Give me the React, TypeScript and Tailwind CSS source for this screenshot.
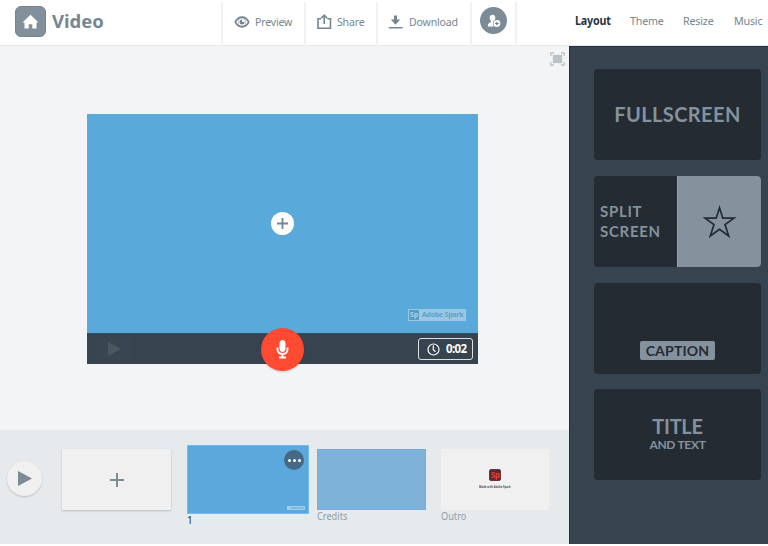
import type { ReactNode } from "react";

const sans = "font-['Noto_Sans','Open_Sans',sans-serif]";
const geo = "font-['Lato',sans-serif]";

function Tool({ width, pad, gap, icon, label, tracking }: { width: string; pad: string; gap: string; icon: ReactNode; label: string; tracking: string }) {
  return (
    <button className={`flex h-[44px] items-center border-l-2 border-[#eff1f2] pb-[5px] ${width} ${pad} ${gap}`}>
      {icon}
      <span className={`origin-left scale-x-[0.92] whitespace-nowrap text-[11.500px] leading-[16px] text-[#758692] ${tracking}`}>{label}</span>
    </button>
  );
}

function Eye() {
  return (
    <svg className="h-[12px] w-[16px] shrink-0" viewBox="0 0 16 12">
      <path d="M.3 6C2 2.300 4.800.3 8 .3s6 2 7.700 5.700C14 9.700 11.200 11.700 8 11.700S2 9.700.3 6Z" fill="#758692" />
      <path d="M2.300 6C3.300 4.300 4 3.400 5 2.900 3.600 4.800 3.600 7.200 5 9.100 4 8.600 3.300 7.700 2.300 6ZM13.700 6C12.700 4.300 12 3.400 11 2.900 12.400 4.800 12.400 7.200 11 9.100 12 8.600 12.700 7.700 13.700 6Z" fill="#fff" />
      <circle cx="8" cy="6" r="3.700" fill="#fff" />
      <circle cx="8" cy="6" r="2.500" fill="#758692" />
      <path d="M8 6V3.800A2.200 2.200 0 0 1 10.200 6Z" fill="#fff" />
    </svg>
  );
}

function ShareIcon() {
  return (
    <svg className="h-[16px] w-[15px] shrink-0" viewBox="0 0 15 16" fill="none" stroke="#758692" strokeWidth="1.600">
      <path d="M4 4.700H1V14.200H13.500V4.700H10.500M7.250 10V1.500M4.300 4.200 7.250 1.200 10.200 4.200" />
    </svg>
  );
}

function DownloadIcon() {
  return (
    <svg className="h-[14px] w-[15px] shrink-0" viewBox="0 0 15 14" fill="#758692">
      <path d="M6 .5H9V4.500H12.200L7.500 9.800 2.800 4.500H6ZM.8 12H14.500V13.500H.8Z" />
    </svg>
  );
}

function Header() {
  const tab = "origin-left scale-x-[0.93]";
  return (
    <header className="flex h-[46px] w-full shrink-0 border-b border-[#e7e9ea] bg-white">
      <div className="flex h-[43px] w-[221px] items-center pl-[15px]">
        <div className="flex size-[31px] items-center justify-center rounded-[6px] border border-[#74838e] bg-[#82909b]">
          <svg className="h-[16px] w-[17px]" viewBox="0 0 17 16" fill="#fff">
            <path d="M8.500.8 16.500 8.600H14.500V14.500H10.300V10.200H6.700V14.500H2.500V8.600H.5Z" />
          </svg>
        </div>
        <span className="ml-[6px] mt-[-1px] text-[18.500px] font-bold leading-[24px] text-[#758692]">Video</span>
      </div>
      <nav className="mt-[2px] flex h-[44px]">
        <Tool width="w-[83px]" pad="pl-[11px]" gap="gap-[5px]" icon={<Eye />} label="Preview" tracking="tracking-[-0.2px]" />
        <Tool width="w-[72px]" pad="pl-[11px]" gap="gap-[5px]" icon={<ShareIcon />} label="Share" tracking="tracking-[-0.2px]" />
        <Tool width="w-[94px]" pad="pl-[10px]" gap="gap-[6px]" icon={<DownloadIcon />} label="Download" tracking="tracking-[-0.2px]" />
        <div className="flex w-[47px] justify-center border-x-2 border-[#eff1f2] pt-[5px]">
          <div className="flex size-[27px] items-center justify-center rounded-full bg-[#7c8b96]">
            <svg className="h-[14px] w-[14px]" viewBox="0 0 14 14">
              <path d="M5.500.8C7.600.8 8.500 2.300 8.300 4.200 8.100 5.500 7.600 6.200 7.300 6.800V8L10 9.200V12.500H.8C.8 9.500 1.800 9 3.900 8.100V6.900C3.200 6.200 2.800 5.300 2.700 4.200 2.600 2.200 3.600.8 5.500.8Z" fill="#fff" />
              <circle cx="9.900" cy="9.500" r="4" fill="#7c8b96" />
              <circle cx="9.900" cy="9.500" r="3.400" fill="#fff" />
              <path d="M9.900 7.700V11.300M8.100 9.500H11.700" stroke="#6c7c88" strokeWidth="1.200" />
            </svg>
          </div>
        </div>
      </nav>
      <nav className="flex h-[43px] items-center whitespace-nowrap pb-px text-[11.500px] leading-[16px] tracking-[-0.2px] text-[#758692]">
        <span className={`ml-[58px] w-[55px] font-bold text-[#25343f] ${tab}`}>Layout</span>
        <span className={`w-[53px] ${tab}`}>Theme</span>
        <span className={`w-[51px] ${tab}`}>Resize</span>
        <span className={tab}>Music</span>
      </nav>
    </header>
  );
}

function Stage() {
  return (
    <section className="flex h-[384px] flex-col items-start bg-[#f2f4f6]">
      <div className="flex h-[25px] w-[24px] items-center justify-center self-end">
        <svg className="h-[14px] w-[15px]" viewBox="0 0 15 14" fill="none" stroke="#bbc3c8" strokeWidth="1.300">
          <rect x="3.500" y="3.500" width="8" height="7" fill="#bbc3c8" />
          <path d="M.8 4V1H4M11 1H14.200V4M14.200 10V13H11M4 13H.8V10" />
        </svg>
      </div>
      <div className="ml-[87px] mt-[43px] w-[391px]">
        <div className="flex h-[219px] flex-col items-center bg-[#59a9db]">
          <div className="mt-[98px] flex size-[23px] items-center justify-center rounded-full bg-white">
            <svg className="size-[11px]" viewBox="0 0 11 11" stroke="#758692" strokeWidth="1.800">
              <path d="M5.500 0V11M0 5.500H11" />
            </svg>
          </div>
          <div className="mr-[12px] mt-[74px] flex h-[12px] w-[58px] items-center gap-[3px] self-end bg-[#98c8e5] pl-px text-[#659fc3]">
            <span className="flex size-[10px] items-center justify-center rounded-[1px] bg-[#5b9ac1] text-[7px] font-bold leading-[10px] text-[#a9d2ea]">Sp</span>
            <span className="whitespace-nowrap text-[7px] font-bold leading-[10px] tracking-[-0.25px]">Adobe Spark</span>
          </div>
        </div>
        <div className="flex h-[31px] items-center border-t border-[#2d4e66] bg-[#37434f]">
          <div className="ml-[10px] flex h-[22px] w-[34px] items-center bg-[#394550] pl-[11px]">
            <svg className="h-[14px] w-[13px]" viewBox="0 0 13 14" fill="#4c5860"><path d="M0 0 13 7 0 14Z" /></svg>
          </div>
          <div className="ml-[130px] flex size-[43px] shrink-0 items-center justify-center rounded-full bg-[#fe4a30] shadow-[0_1px_2px_rgba(0,0,0,0.2)]">
            <svg className="h-[19px] w-[13px]" viewBox="0 0 13 19" fill="none" stroke="#fff">
              <rect x="4" y="0.500" width="5" height="11" rx="2.500" fill="#fff" />
              <path d="M1.500 7.500V9.500A5 4.500 0 0 0 11.500 9.500V7.500M6.500 14V17.500M3 17.500H10" strokeWidth="1.900" />
            </svg>
          </div>
          <div className="ml-auto mr-[5px] flex h-[22px] w-[55px] items-center gap-[6px] rounded-[3px] border border-[#dce0e3] pl-[8px] text-white">
            <svg className="size-[13px] shrink-0" viewBox="0 0 13 13" fill="none" stroke="#fff" strokeWidth="1.200">
              <circle cx="6.500" cy="6.500" r="5.500" /><path d="M6.300 2.500V6.700L8.500 8.800" />
            </svg>
            <span className="text-[11.500px] font-bold leading-[16px] tracking-[-0.6px]">0:02</span>
          </div>
        </div>
      </div>
    </section>
  );
}

function Timeline() {
  return (
    <section className="flex h-[114px] items-start bg-[#e6eaed] text-[10px] leading-[12px] text-[#929da5]">
      <div className="ml-[7px] mt-[31px] flex size-[35px] items-center justify-center rounded-full bg-[#f0f0f0] shadow-[0_1px_2px_rgba(0,0,0,0.18)]">
        <svg className="h-[15px] w-[14px]" viewBox="0 0 14 15" fill="#7c8b96"><path d="M0 0 14 7.500 0 15Z" /></svg>
      </div>
      <div className="ml-[20px] mt-[19px] flex h-[61px] w-[109px] items-center justify-center bg-[#f0f0f0] shadow-[0_1px_2px_rgba(0,0,0,0.2)]">
        <svg className="size-[14px]" viewBox="0 0 14 14" stroke="#7c8b96" strokeWidth="2"><path d="M7 0V14M0 7H14" /></svg>
      </div>
      <div className="ml-[16px] mt-[15px] w-[122px]">
        <div className="flex h-[69px] flex-col items-end border border-[#6ebcf0] bg-[#5aa8dc] pr-[4px] pt-[4px]">
          <div className="flex size-[20px] items-center justify-center gap-[2px] rounded-full bg-[#446886]">
            <i className="size-[3px] rounded-full bg-white" /><i className="size-[3px] rounded-full bg-white" /><i className="size-[3px] rounded-full bg-white" />
          </div>
          <div className="mr-[-1px] mt-[36px] flex h-[4px] w-[18px] items-center bg-[#9dd0ee] pl-[4px]">
            <i className="h-[2px] w-[13px] bg-[#7bbae2]" />
          </div>
        </div>
        <div className="text-[#24313b]">1</div>
      </div>
      <div className="ml-[8px] mt-[19px] w-[109px]">
        <div className="h-[61px] border border-[#6dafdd] bg-[#7eb2d8]" />
        <div className="origin-left scale-x-[0.92]">Credits</div>
      </div>
      <div className="ml-[15px] mt-[19px] w-[108px]">
        <div className="flex h-[61px] flex-col items-center bg-[#f0f0f0] pt-[20px]">
          <div className="flex size-[12px] items-center justify-center rounded-[2px] border border-[#68383e] bg-[#552a31] text-[8px] font-bold leading-[10px] tracking-[-0.5px] text-[#ea3b39]">Sp</div>
          <div className="mt-[3px] w-[32px] origin-left scale-x-[0.84] whitespace-nowrap text-[3.200px] font-bold leading-[6px] text-[#555]">Made with Adobe Spark</div>
        </div>
        <div className="origin-left scale-x-[0.92]">Outro</div>
      </div>
    </section>
  );
}

function LayoutPanel() {
  const card = "flex h-[91px] w-[167px] shrink-0 rounded-[4px] bg-[#242b32]";
  return (
    <aside className={`flex h-[498px] w-[199px] flex-col gap-[16px] border-l border-t border-[#25323d] bg-[#37434f] pl-[24px] pt-[22px] font-bold text-[#84929d] ${geo}`}>
      <div className={`${card} items-center justify-center pb-px text-[20px] leading-[24px] tracking-[0.4px]`}>FULLSCREEN</div>
      <div className={`${card} overflow-hidden`}>
        <div className="flex w-[83px] flex-col justify-center pb-[2px] pl-[6px] text-[15px] leading-[20px] tracking-[0.7px]"><span>SPLIT</span><span>SCREEN</span></div>
        <div className="flex flex-1 items-center justify-center border-l border-[#95a3ad] bg-[#84929d]">
          <svg className="size-[34px]" viewBox="0 0 34 34" fill="none" stroke="#242b32" strokeWidth="1.700">
            <path d="M16.500 2.800 19.800 13.200H31L22 19.500 25.700 31 16.500 24.200 7.300 31 11 19.500 2 13.200H13.200Z" />
          </svg>
        </div>
      </div>
      <div className={`${card} items-end justify-center pb-[14px]`}>
        <div className="flex h-[19px] w-[75px] items-center justify-center rounded-[2px] bg-[#84929d] text-[14px] leading-[18px] tracking-[0.2px] text-[#242b32]">CAPTION</div>
      </div>
      <div className={`${card} mt-[-1px] flex-col items-center pt-[25px] text-center`}>
        <div className="text-[20px] leading-[24px] tracking-[-0.3px]">TITLE</div>
        <div className="mt-px whitespace-nowrap text-[12px] leading-[12px] tracking-[-0.3px]">AND TEXT</div>
      </div>
    </aside>
  );
}

export default function App() {
  return (
    <div className={`flex h-[546px] w-[768px] flex-col overflow-hidden bg-white ${sans}`}>
      <Header />
      <main className="flex h-[498px] shrink-0">
        <div className="w-[569px] shrink-0"><Stage /><Timeline /></div>
        <LayoutPanel />
      </main>
    </div>
  );
}
